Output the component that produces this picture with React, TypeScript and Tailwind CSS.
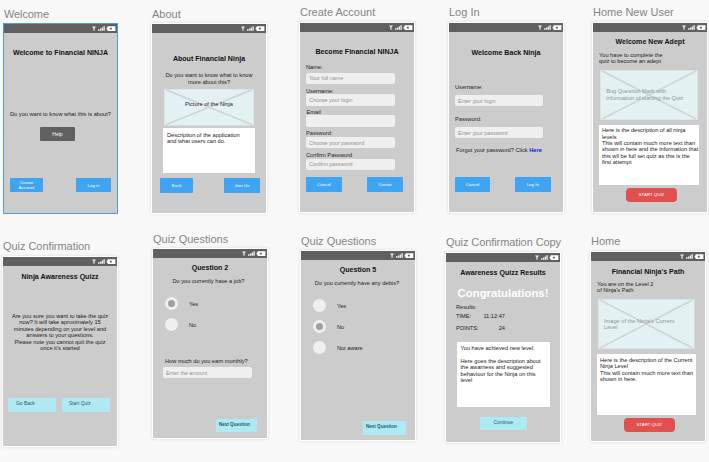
import React from "react";
import clsx from "clsx";

type BoxProps = { className?: string; children?: React.ReactNode };

const StatusBar = () => (
  <div className="flex h-[9px] w-full shrink-0 items-center justify-end bg-[#606060]">
    <svg width="26" height="9" viewBox="0 0 26 9" fill="#fff">
      <path d="M1 2.4h4L3.6 4.4v2.4H2.4V4.4z" opacity=".85" />
      <path d="M7 5.2h1.6v1.6H7zM9 4.4h1.3v2.4H9zM10.7 3.4h1.3v3.4h-1.3zM12.4 2.2h1.4v4.6h-1.4z" opacity=".9" />
      <path fillRule="evenodd" d="M16.6 2.2h7.8v4.8h-7.8v-1.2h-.9V3.4h.9zM18.8 3.7v1.8h2V3.7z" />
    </svg>
  </div>
);

const Artboard = ({
  name,
  className,
  titleClass = "mb-[3px]",
  frameClass = "w-[116px] bg-white shadow-[0_0_3px_rgba(0,0,0,0.12)]",
  children,
}: BoxProps & { name: string; titleClass?: string; frameClass?: string }) => (
  <section className={clsx("flex shrink-0 flex-col", className)}>
    <h2 className={clsx("ml-px h-[14px] whitespace-nowrap text-[11px] leading-[15px] text-[#858585]", titleClass)}>{name}</h2>
    <div className={clsx("h-[191px] p-px", frameClass)}>
      <div className="flex h-full flex-col bg-[#cccccc]">
        <StatusBar />
        {children}
      </div>
    </div>
  </section>
);

const Heading = ({ className, children }: BoxProps) => (
  <h3 className={clsx("h-[8px] whitespace-nowrap text-center text-[7.07px] font-bold leading-[10px] text-[#111]", className)}>
    {children}
  </h3>
);

const Text = ({ className, children }: BoxProps) => (
  <p className={clsx("-mb-[0.6px] whitespace-pre pt-[0.6px] text-[5.66px] leading-[6.4px]", className)}>{children}</p>
);

const Input = ({ className, children }: BoxProps) => (
  <div className={clsx("flex shrink-0 items-center rounded-[2px] bg-[#efefef] pl-[3px] text-[5.4px] leading-[6px] text-[#929292]", className)}>
    {children}
  </div>
);

const Button = ({ className, children }: BoxProps) => (
  <div className={clsx("flex shrink-0 items-center justify-center rounded-[1px] text-center leading-[5px] text-white", className)}>
    {children}
  </div>
);

const SoftButton = ({ className, children }: BoxProps) => (
  <div className={clsx("flex shrink-0 items-center rounded-[1px] bg-[#aee9f4] leading-[6px] text-[#1f5f6a]", className)}>
    {children}
  </div>
);

const Picture = ({ className, children }: BoxProps) => (
  <div className={clsx("grid shrink-0 bg-[#e4f1f2]", className)}>
    <svg className="col-start-1 row-start-1 h-full w-full" viewBox="0 0 100 50" preserveAspectRatio="none">
      <path d="M2 1L98 49M98 1L2 49" stroke="#cfd6d6" strokeWidth="1.8" vectorEffect="non-scaling-stroke" />
      <rect x="0" y="0" width="100" height="50" fill="none" stroke="#d5dcdc" strokeWidth="1" vectorEffect="non-scaling-stroke" />
    </svg>
    <div className="z-10 col-start-1 row-start-1 flex items-center">{children}</div>
  </div>
);

const Note = ({ className, children }: BoxProps) => (
  <div className={clsx("shrink-0 bg-white", className)}>
    <Text>{children}</Text>
  </div>
);

const Radio = ({ className, label, checked = false }: { className?: string; label: string; checked?: boolean }) => (
  <div className={clsx("flex h-[13.4px] shrink-0 items-center gap-[10.5px]", className)}>
    <span className="flex h-[13.4px] w-[13.4px] items-center justify-center rounded-full bg-[#efefef]">
      {checked && <span className="h-[7.4px] w-[7.4px] rounded-full bg-[#a0a0a0]" />}
    </span>
    <Text>{label}</Text>
  </div>
);

export default function App() {
  return (
    <main className="h-[462px] w-[709px] overflow-hidden bg-[#f8f8f8] font-['Liberation_Sans',Arial,sans-serif] text-[#222]">
      <div className="flex h-[225px] items-start pl-[3px]">
        <Artboard name="Welcome" className="w-[148px] pt-[7px]" titleClass="mb-[2px] tracking-[-0.1px]" frameClass="w-[115px] bg-[#4a9de0]">
          <Heading className="mt-[15.4px]">Welcome to Financial NINJA</Heading>
          <Text className="mt-[54.2px] text-center">Do you want to know what this is about?</Text>
          <Button className="ml-[36px] mt-[10.5px] h-[14px] w-[35px] bg-[#606060] text-[5px]">Help</Button>
          <div className="mt-[36.5px] flex gap-[33px] pl-[6px] text-[4.4px]">
            <Button className="h-[14.5px] w-[33px] bg-[#3fa5f2]">Create<br />Account</Button>
            <Button className="h-[14.5px] w-[35px] bg-[#3fa5f2]">Log in</Button>
          </div>
        </Artboard>

        <Artboard name="About" className="w-[148px] pt-[7px]" titleClass="mb-[2px]">
          <Heading className="mt-[21px]">About Financial Ninja</Heading>
          <Text className="mt-[9.6px] text-center">Do you want to know what to know<br />more about this?</Text>
          <Picture className="ml-[11.5px] mt-[4.6px] h-[36.5px] w-[90px]">
            <Text className="ml-[21.5px] mt-[-7px]">Picture of the Ninja</Text>
          </Picture>
          <Note className="ml-[11px] mt-[2.5px] h-[44.5px] w-[92px] pl-[4px] pt-[3.4px]">
            Description of the application<br />and what users can do.
          </Note>
          <div className="mt-[5.5px] flex gap-[31.3px] pl-[8px] text-[4.4px]">
            <Button className="h-[14.5px] w-[33px] bg-[#3fa5f2]">Back</Button>
            <Button className="h-[14.5px] w-[35.5px] bg-[#3fa5f2]">Join Us</Button>
          </div>
        </Artboard>

        <Artboard name="Create Account" className="w-[149px] pt-[5px]">
          <Heading className="mt-[15.3px]">Become Financial NINJA</Heading>
          <Text className="ml-[6px] mt-[7.7px]">Name:</Text>
          <Input className="ml-[6px] mt-[3.6px] h-[11px] w-[89px]">Your full name</Input>
          <Text className="ml-[6px] mt-[3px]">Username:</Text>
          <Input className="ml-[6px] mt-[0.9px] h-[11.7px] w-[89px]">Choose your login</Input>
          <Text className="ml-[6.5px] mt-[2px]">Email</Text>
          <Input className="ml-[6px] mt-[0.6px] h-[12px] w-[89px]" />
          <Text className="ml-[6px] mt-[2px]">Password:</Text>
          <Input className="ml-[6px] mt-[1.6px] h-[11.5px] w-[89px]">Choose your password</Input>
          <Text className="ml-[6px] mt-[2.5px]">Confirm Password</Text>
          <Input className="ml-[6px] mt-[1.3px] h-[11.3px] w-[89px]">Confirm password</Input>
          <div className="mt-[7px] flex gap-[25px] pl-[6px] text-[4.4px]">
            <Button className="h-[15px] w-[36px] bg-[#3fa5f2]">Cancel</Button>
            <Button className="h-[15px] w-[36px] bg-[#3fa5f2]">Create</Button>
          </div>
        </Artboard>

        <Artboard name="Log In" className="w-[144px] pt-[5px]">
          <Heading className="mt-[15.6px]">Welcome Back Ninja</Heading>
          <Text className="ml-[6px] mt-[28px]">Username:</Text>
          <Input className="ml-[6px] mt-[5px] h-[11px] w-[88px]">Enter your login</Input>
          <Text className="ml-[6px] mt-[9.3px]">Password:</Text>
          <Input className="ml-[6px] mt-[5.3px] h-[11px] w-[88px]">Enter your password</Input>
          <Text className="ml-[7px] mt-[8.7px]">
            Forgot your password? Click <b className="text-[#1414d8]">Here</b>
          </Text>
          <div className="mt-[24px] flex gap-[25px] pl-[6px] text-[4.4px]">
            <Button className="h-[14.5px] w-[35px] bg-[#3fa5f2]">Cancel</Button>
            <Button className="h-[14.5px] w-[35.5px] bg-[#3fa5f2]">Log In</Button>
          </div>
        </Artboard>

        <Artboard name="Home New User" className="w-[117px] pt-[5px]">
          <Heading className="mt-[5.3px]">Welcome New Adept</Heading>
          <Text className="ml-[6px] mt-[5.7px]">You have to complete the<br />quiz to become an adept</Text>
          <Picture className="ml-[6.7px] mt-[6.2px] h-[50px] w-[98px]">
            <Text className="-mt-[2px] ml-[6.5px] text-[#8f9696]">Bug Question Mark with<br />information of starting the Quiz</Text>
          </Picture>
          <Note className="ml-[6px] mt-[5px] h-[59.7px] w-[100px] pl-[3px] pt-[1.6px]">
            Here is the description of all ninja<br />levels<br />This will contain much more text than<br />shown in here and the information that<br />this wll be full set quiz as this is the<br />first attempt
          </Note>
          <Button className="ml-[33px] mt-[3.3px] h-[14px] w-[51px] rounded-[4px] bg-[#e0504f] text-[4.4px]">START QUIZ</Button>
        </Artboard>
      </div>

      <div className="flex items-start pl-[2px]">
        <Artboard name="Quiz Confirmation" className="w-[150px] pt-[14px]" titleClass="mb-[3px] tracking-[-0.05px]">
          <Heading className="mt-[5.7px]">Ninja Awareness Quizz</Heading>
          <Text className="mt-[32.6px] text-center">
            Are you sure you want to take the quiz<br />now? It will take aproximately 15<br />minutes depending on your level and<br />answers to your questions.<br />Please note you cannot quit the quiz<br />once it's started
          </Text>
          <div className="mt-[47.3px] flex gap-[5.5px] pl-[5px] text-[4.9px]">
            <SoftButton className="h-[13.5px] w-[48px] pb-px pl-[8px]">Go Back</SoftButton>
            <SoftButton className="h-[13.5px] w-[48.5px] pb-px pl-[7.5px]">Start Quiz</SoftButton>
          </div>
        </Artboard>

        <Artboard name="Quiz Questions" className="w-[148px] pt-[7px]" titleClass="mb-[2px]">
          <Heading className="mt-[5.3px]">Question 2</Heading>
          <Text className="mt-[6.4px] pr-[3px] text-center">Do you currently have a job?</Text>
          <Radio className="ml-[12px] mt-[12.6px]" label="Yes" checked />
          <Radio className="ml-[12px] mt-[7.7px]" label="No" />
          <Text className="ml-[12px] mt-[25.8px]">How much do you earn monthly?</Text>
          <Input className="ml-[10px] mt-[3.6px] h-[11.3px] w-[88.5px]">Enter the amount</Input>
          <SoftButton className="ml-[63px] mt-[40.7px] h-[13px] w-[41px] pb-px pl-[3px] text-[4.55px] font-bold">Next Question</SoftButton>
        </Artboard>

        <Artboard name="Quiz Questions" className="w-[145px] pt-[9px]" titleClass="mb-[2px]">
          <Heading className="mt-[5.3px]">Question 5</Heading>
          <Text className="mt-[6.4px] pr-[2px] text-center">Do you currently have any debts?</Text>
          <Radio className="ml-[12px] mt-[12.7px]" label="Yes" />
          <Radio className="ml-[12px] mt-[7.7px]" label="No" checked />
          <Radio className="ml-[12px] mt-[7.7px]" label="Not aware" />
          <SoftButton className="ml-[61.5px] mt-[66.5px] h-[14px] w-[43px] pb-px pl-[3.5px] text-[4.55px] font-bold">Next Question</SoftButton>
        </Artboard>

        <Artboard name="Quiz Confirmation Copy" className="w-[145px] pt-[10px]" titleClass="mb-[3px] tracking-[-0.08px]">
          <Heading className="mt-[5.6px]">Awareness Quizz Results</Heading>
          <p className="mt-[11.9px] text-center text-[11.37px] font-bold leading-[12px] text-white">Congratulations!</p>
          <Text className="ml-[10px] mt-[3.5px]">Results:</Text>
          <div className="ml-[10px] mt-[3.4px] flex w-[49px] justify-between">
            <Text>TIME:</Text>
            <Text>11:12:47</Text>
          </div>
          <div className="ml-[10px] mt-[4.9px] flex w-[49px] justify-between">
            <Text>POINTS:</Text>
            <Text>24</Text>
          </div>
          <Note className="ml-[10.5px] mt-[11.2px] h-[65.3px] w-[93.5px] pl-[4px] pt-[3px]">
            You have achieved new level.<br /><br />Here goes the description about<br />the awarness and suggested<br />behaviour for the Ninja on this<br />level
          </Note>
          <SoftButton className="ml-[33.5px] mt-[9.6px] h-[13px] w-[47.5px] justify-center pb-px text-[4.9px]">Continue</SoftButton>
        </Artboard>

        <Artboard name="Home" className="w-[117px] pt-[9px]">
          <Heading className="mt-[5.6px]">Financial Ninja's Path</Heading>
          <Text className="ml-[6px] mt-[5.4px]">You are on the Level 2<br />of Ninja's Path</Text>
          <Picture className="ml-[7px] mt-[6.7px] h-[50px] w-[96.5px]">
            <Text className="-mt-[2px] ml-[6px] text-[#8f9696]">Image of the Ninja's Current<br />Level</Text>
          </Picture>
          <Note className="ml-[6px] mt-[4.5px] h-[60.7px] w-[99px] pl-[3px] pt-[2.4px]">
            Here is the description of the Current<br />Ninja Level<br />This will contain much more text than<br />shown in here.
          </Note>
          <Button className="ml-[33px] mt-[3.3px] h-[14px] w-[50.5px] rounded-[4px] bg-[#e0504f] text-[4.4px]">START QUIZ</Button>
        </Artboard>
      </div>
    </main>
  );
}
